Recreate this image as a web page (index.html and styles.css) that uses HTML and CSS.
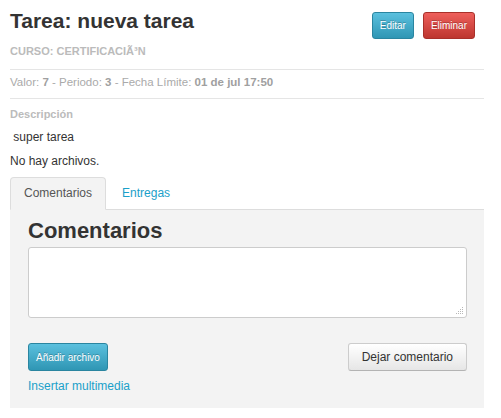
FILE: index.html
```html
<!DOCTYPE html>
<html>
<head>
<meta charset="utf-8">
<link rel="stylesheet" href="styles.css">
</head>
<body>
<div class="page">
  <div class="header">
    <div class="titles">
      <h1 class="title">Tarea: nueva tarea</h1>
      <div class="course">CURSO: CERTIFICACIÃ³N</div>
    </div>
    <div class="actions">
      <button class="btn btn-info">Editar</button>
      <button class="btn btn-danger">Eliminar</button>
    </div>
  </div>
  <div class="meta">Valor: <b>7</b> - Periodo: <b>3</b> - Fecha Límite: <b>01 de jul 17:50</b></div>
  <div class="desc-label">Descripción</div>
  <p class="desc">&nbsp;super tarea</p>
  <p class="files">No hay archivos.</p>
  <div class="tabs">
    <div class="tab active">Comentarios</div>
    <div class="tab">Entregas</div>
  </div>
  <div class="panel">
    <h2 class="panel-title">Comentarios</h2>
    <div class="comment-wrap">
      <textarea class="comment"></textarea>
      <svg class="grip" width="9" height="9" viewBox="0 0 9 9">
        <g fill="#b8b8b8">
          <rect x="7" y="1" width="1" height="1"/>
          <rect x="5" y="3" width="1" height="1"/>
          <rect x="7" y="3" width="1" height="1"/>
          <rect x="3" y="5" width="1" height="1"/>
          <rect x="5" y="5" width="1" height="1"/>
          <rect x="7" y="5" width="1" height="1"/>
          <rect x="1" y="7" width="1" height="1"/>
          <rect x="3" y="7" width="1" height="1"/>
          <rect x="5" y="7" width="1" height="1"/>
          <rect x="7" y="7" width="1" height="1"/>
        </g>
      </svg>
    </div>
    <div class="row">
      <button class="btn btn-info">Añadir archivo</button>
      <button class="btn btn-default">Dejar comentario</button>
    </div>
    <a class="link">Insertar multimedia</a>
  </div>
</div>
</body>
</html>
```
FILE: styles.css
```css
* { box-sizing: border-box; }
body {
  margin: 0;
  font-family: "Liberation Sans", Arial, sans-serif;
  font-size: 12px;
  color: #333;
  background: #fff;
}
.page {
  width: 474px;
  margin-left: 10px;
}
.header {
  display: flex;
  justify-content: space-between;
  align-items: flex-start;
  padding-top: 8px;
  border-bottom: 1px solid #e5e5e5;
  padding-bottom: 11px;
}
.title {
  margin: 0;
  font-size: 21px;
  line-height: 26px;
  font-weight: bold;
  color: #333;
}
.course {
  margin-top: 10px;
  font-size: 11px;
  font-weight: bold;
  color: #bbb;
  line-height: 14px;
}
.actions {
  display: flex;
  gap: 9px;
  padding-top: 4px;
  margin-right: 9px;
}
.btn {
  font-family: "Liberation Sans", Arial, sans-serif;
  font-size: 10px;
  height: 27px;
  padding: 0 7px;
  border-radius: 3px;
  cursor: pointer;
}
.btn-info {
  color: #fff;
  background: linear-gradient(#5bc0de, #2f96b4);
  border: 1px solid #2a85a0;
  text-shadow: 0 -1px 0 rgba(0,0,0,0.25);
}
.btn-danger {
  color: #fff;
  background: linear-gradient(#ee5f5b, #bd362f);
  border: 1px solid #a9302a;
  text-shadow: 0 -1px 0 rgba(0,0,0,0.25);
}
.btn-default {
  color: #333;
  font-size: 12px;
  background: linear-gradient(#ffffff, #e6e6e6);
  border: 1px solid #ccc;
  border-bottom-color: #b3b3b3;
  padding: 0 13px;
}
.meta {
  font-size: 11.5px;
  color: #aaa;
  line-height: 14px;
  padding: 5px 0 9px;
  border-bottom: 1px solid #e5e5e5;
}
.meta b { color: #a0a0a0; }
.desc-label {
  margin-top: 8px;
  font-size: 11px;
  font-weight: bold;
  color: #bbb;
  line-height: 14px;
}
.desc {
  margin: 9px 0 0;
  line-height: 14px;
}
.files {
  margin: 10px 0 0;
  line-height: 14px;
}
.tabs {
  display: flex;
  margin-top: 9px;
  border-bottom: 1px solid #ddd;
  height: 33px;
}
.tab {
  padding: 0 13px 0 15px;
  line-height: 31px;
  font-size: 12px;
  color: #1aa0c9;
  border: 1px solid transparent;
  border-radius: 4px 4px 0 0;
}
.tab.active {
  color: #555;
  background: #f3f3f3;
  border-color: #ddd;
  border-bottom-color: #f3f3f3;
  margin-bottom: -1px;
  height: 33px;
  padding: 0 13px;
}
.panel {
  background: #f3f3f3;
  padding: 9px 17px 15px 18px;
}
.panel-title {
  margin: 0;
  font-size: 22px;
  line-height: 24px;
  font-weight: bold;
  color: #333;
}
.comment-wrap {
  position: relative;
  width: 439px;
  margin-top: 4px;
}
.comment {
  display: block;
  width: 439px;
  height: 71px;
  border: 1px solid #ccc;
  border-radius: 3px;
  background: #fff;
  resize: none;
}
.grip {
  position: absolute;
  right: 3px;
  bottom: 3px;
}
.row {
  display: flex;
  justify-content: space-between;
  margin-top: 25px;
  width: 439px;
}
.row .btn { height: 28px; }
.link {
  display: block;
  margin-top: 8px;
  color: #1aa0c9;
  font-size: 12px;
  line-height: 14px;
}
```
